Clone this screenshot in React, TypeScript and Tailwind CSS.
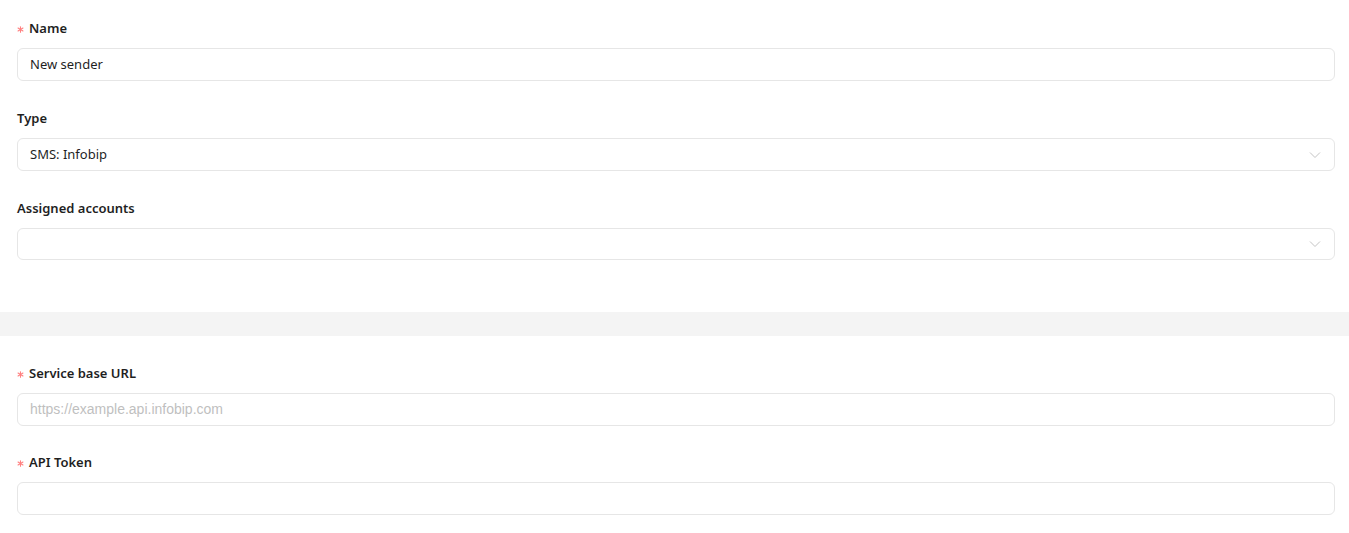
import React from 'react';

const Chevron = () => (
  <svg width="12" height="12" viewBox="0 0 12 12" fill="none" className="text-[#c4c4c4]">
    <path d="M1 3.5 L6 8.5 L11 3.5" stroke="currentColor" strokeWidth="1" />
  </svg>
);

const Label = ({ text, required }: { text: string; required?: boolean }) => (
  <div className="flex items-center h-[22px] pt-[2px] mb-[9px] text-[13px] font-semibold text-[#1f1f1f]">
    {required && (
      <svg width="7" height="7" viewBox="0 0 8 8" className="mr-[5px] text-[#ff8080]">
        <g stroke="currentColor" strokeWidth="1.3" strokeLinecap="round">
          <path d="M4 0.8 V7.2" />
          <path d="M1.2 2.4 L6.8 5.6" />
          <path d="M6.8 2.4 L1.2 5.6" />
        </g>
      </svg>
    )}
    {text}
  </div>
);

const TextInput = ({ value, placeholder }: { value?: string; placeholder?: string }) => (
  <div className="h-[33px] rounded-[6px] border border-[#e6e6e6] bg-white flex items-center px-[12px] text-[13px]">
    {value ? (
      <span className="text-[#1f1f1f]">{value}</span>
    ) : (
      <span className="text-[#bfbfbf] text-[14px] font-['Liberation_Sans',Arial,sans-serif]">{placeholder}</span>
    )}
  </div>
);

const SelectInput = ({ value }: { value?: string }) => (
  <div
    className={`${value ? 'h-[33px]' : 'h-[32px]'} rounded-[6px] border border-[#e6e6e6] bg-white flex items-center justify-between pl-[12px] pr-[13px] text-[13px]`}
  >
    <span className="text-[#1f1f1f]">{value}</span>
    <Chevron />
  </div>
);

const App = () => {
  return (
    <div className="bg-white min-h-screen font-['Noto_Sans',sans-serif]">
      {/* Basic settings */}
      <div className="pl-[17px] pr-[14px] pt-[17px] pb-[52px] flex flex-col gap-[26px]">
        <div>
          <Label text="Name" required />
          <TextInput value="New sender" />
        </div>
        <div>
          <Label text="Type" />
          <SelectInput value="SMS: Infobip" />
        </div>
        <div>
          <Label text="Assigned accounts" />
          <SelectInput />
        </div>
      </div>

      <div className="h-[24px] bg-[#f4f4f4]" />

      {/* Provider settings */}
      <div className="pl-[17px] pr-[14px] pt-[26px] pb-[20px] flex flex-col gap-[25px]">
        <div>
          <Label text="Service base URL" required />
          <TextInput placeholder="https://example.api.infobip.com" />
        </div>
        <div>
          <Label text="API Token" required />
          <TextInput />
        </div>
      </div>
    </div>
  );
};

export default App;
